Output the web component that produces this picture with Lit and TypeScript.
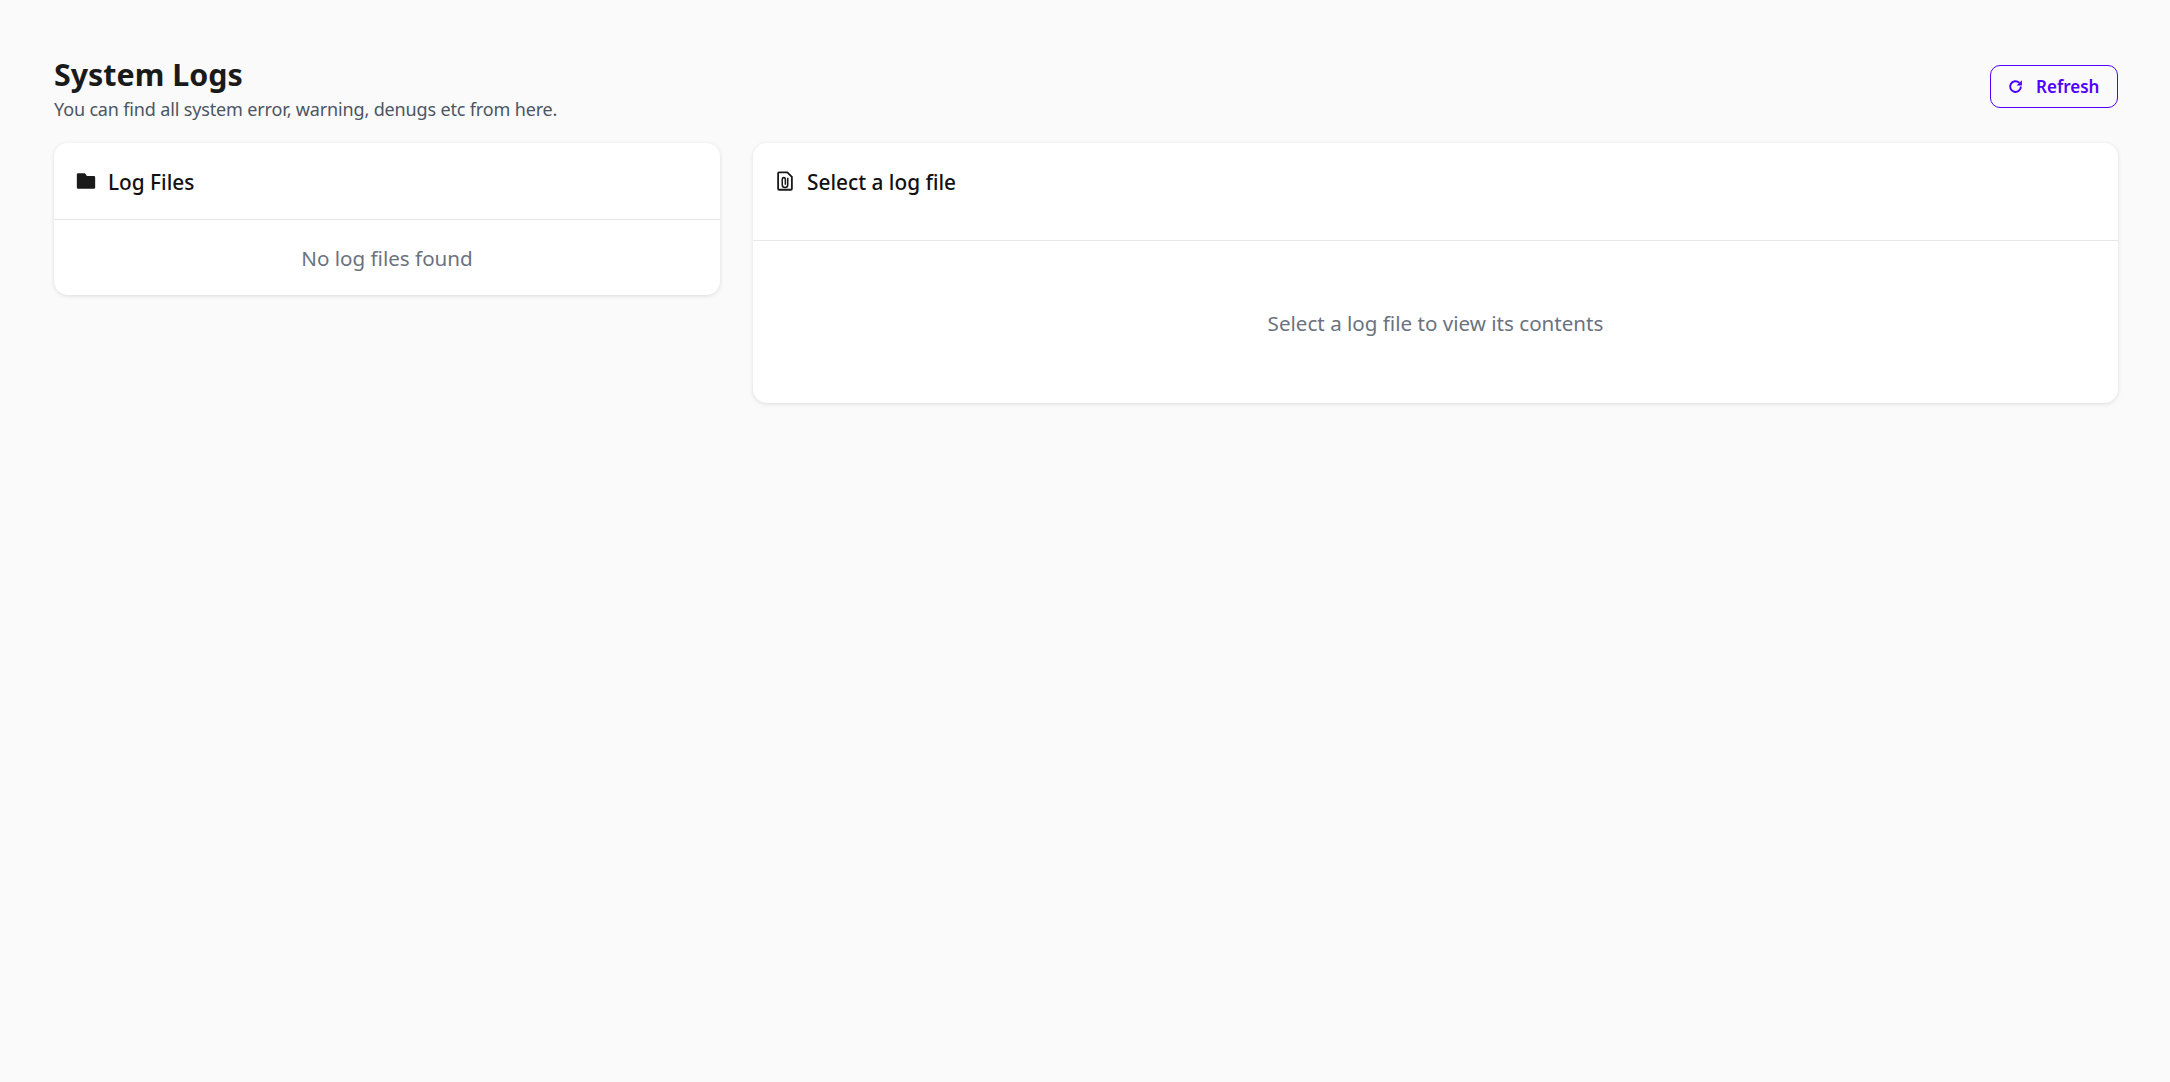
import { LitElement, html, css } from "lit";
import { customElement } from "lit/decorators.js";

@customElement("app-root")
export class AppRoot extends LitElement {
  static styles = css`
    :host {
      display: block;
      min-height: 1082px;
      background: #fafafa;
      font-family: "Noto Sans", "Open Sans", sans-serif;
      color: #1a1a1a;
    }
    .page {
      padding: 54px 52px 0 54px;
    }
    .head {
      display: flex;
      justify-content: space-between;
      align-items: flex-start;
      height: 89px;
    }
    .heading {
      display: flex;
      flex-direction: column;
    }
    h1 {
      margin: 0;
      font-size: 30.4px;
      line-height: 41px;
      font-weight: 700;
      color: #1a1a1a;
    }
    .sub {
      margin-top: 3px;
      font-size: 18px;
      line-height: 22px;
      color: #4b5563;
      letter-spacing: -0.15px;
    }
    .refresh {
      display: flex;
      align-items: center;
      gap: 12px;
      box-sizing: border-box;
      width: 128px;
      height: 43px;
      padding: 0 16px;
      margin-top: 11px;
      background: transparent;
      border: 1px solid #4f00ff;
      border-radius: 10px;
      color: #4f00ff;
      font: 600 17px "Noto Sans", sans-serif;
    }
    .refresh svg {
      width: 17px;
      height: 17px;
      flex: none;
    }
    .grid {
      display: grid;
      grid-template-columns: 666px 1fr;
      gap: 33px;
      align-items: start;
    }
    .card {
      background: #fff;
      border-radius: 14px;
      box-shadow: 0 1px 4px rgba(0, 0, 0, 0.12);
      overflow: hidden;
    }
    .card-head {
      display: flex;
      align-items: flex-start;
      gap: 11px;
      box-sizing: border-box;
      height: 77px;
      padding: 27px 22px 0 21px;
      border-bottom: 1px solid #e6e7e9;
      font-size: 20.8px;
      line-height: 24px;
      font-weight: 500;
      color: #111;
    }
    .card-head.tall {
      height: 98px;
    }
    .card-head svg {
      width: 22px;
      height: 22px;
      flex: none;
    }
    .empty {
      display: flex;
      align-items: center;
      justify-content: center;
      box-sizing: border-box;
      height: 75px;
      padding-top: 1px;
      font-size: 20.6px;
      color: #6b7280;
    }
    .empty.tall {
      height: 162px;
    }
  `;

  render() {
    return html`
      <div class="page">
        <div class="head">
          <div class="heading">
            <h1>System Logs</h1>
            <div class="sub">You can find all system error, warning, denugs etc from here.</div>
          </div>
          <button class="refresh">
            <svg viewBox="0 0 24 24" fill="none" stroke="currentColor" stroke-width="2.8">
              <path d="M19.600 12a7.600 7.600 0 1 1-2.300-5.400" />
              <path d="M21 3v7.500h-7.500z" fill="currentColor" stroke="none" />
            </svg>
            Refresh
          </button>
        </div>
        <div class="grid">
          <section class="card">
            <div class="card-head">
              <svg viewBox="0 0 24 24" fill="#1a1a1a">
                <path d="M3.5 3.5h6.7c.3 0 .6.1.8.4L13 6.5h7.5c.8 0 1.5.7 1.5 1.5v11c0 .8-.7 1.500-1.500 1.500h-17C2.700 20.500 2 19.800 2 19V5c0-.8.7-1.500 1.500-1.500z" />
              </svg>
              Log Files
            </div>
            <div class="empty">No log files found</div>
          </section>
          <section class="card">
            <div class="card-head tall">
              <svg viewBox="0 0 24 24" fill="none" stroke="#1a1a1a" stroke-width="2">
                <path d="M5.500 2.500h9l5 5v13a1 1 0 0 1-1 1h-13a1 1 0 0 1-1-1v-17a1 1 0 0 1 1-1z" />
                <path d="M15 8.500v7.500a3 3 0 0 1-6 0v-6a1.700 1.700 0 0 1 3.400 0v6" stroke-width="1.700" />
              </svg>
              Select a log file
            </div>
            <div class="empty tall">Select a log file to view its contents</div>
          </section>
        </div>
      </div>
    `;
  }
}
